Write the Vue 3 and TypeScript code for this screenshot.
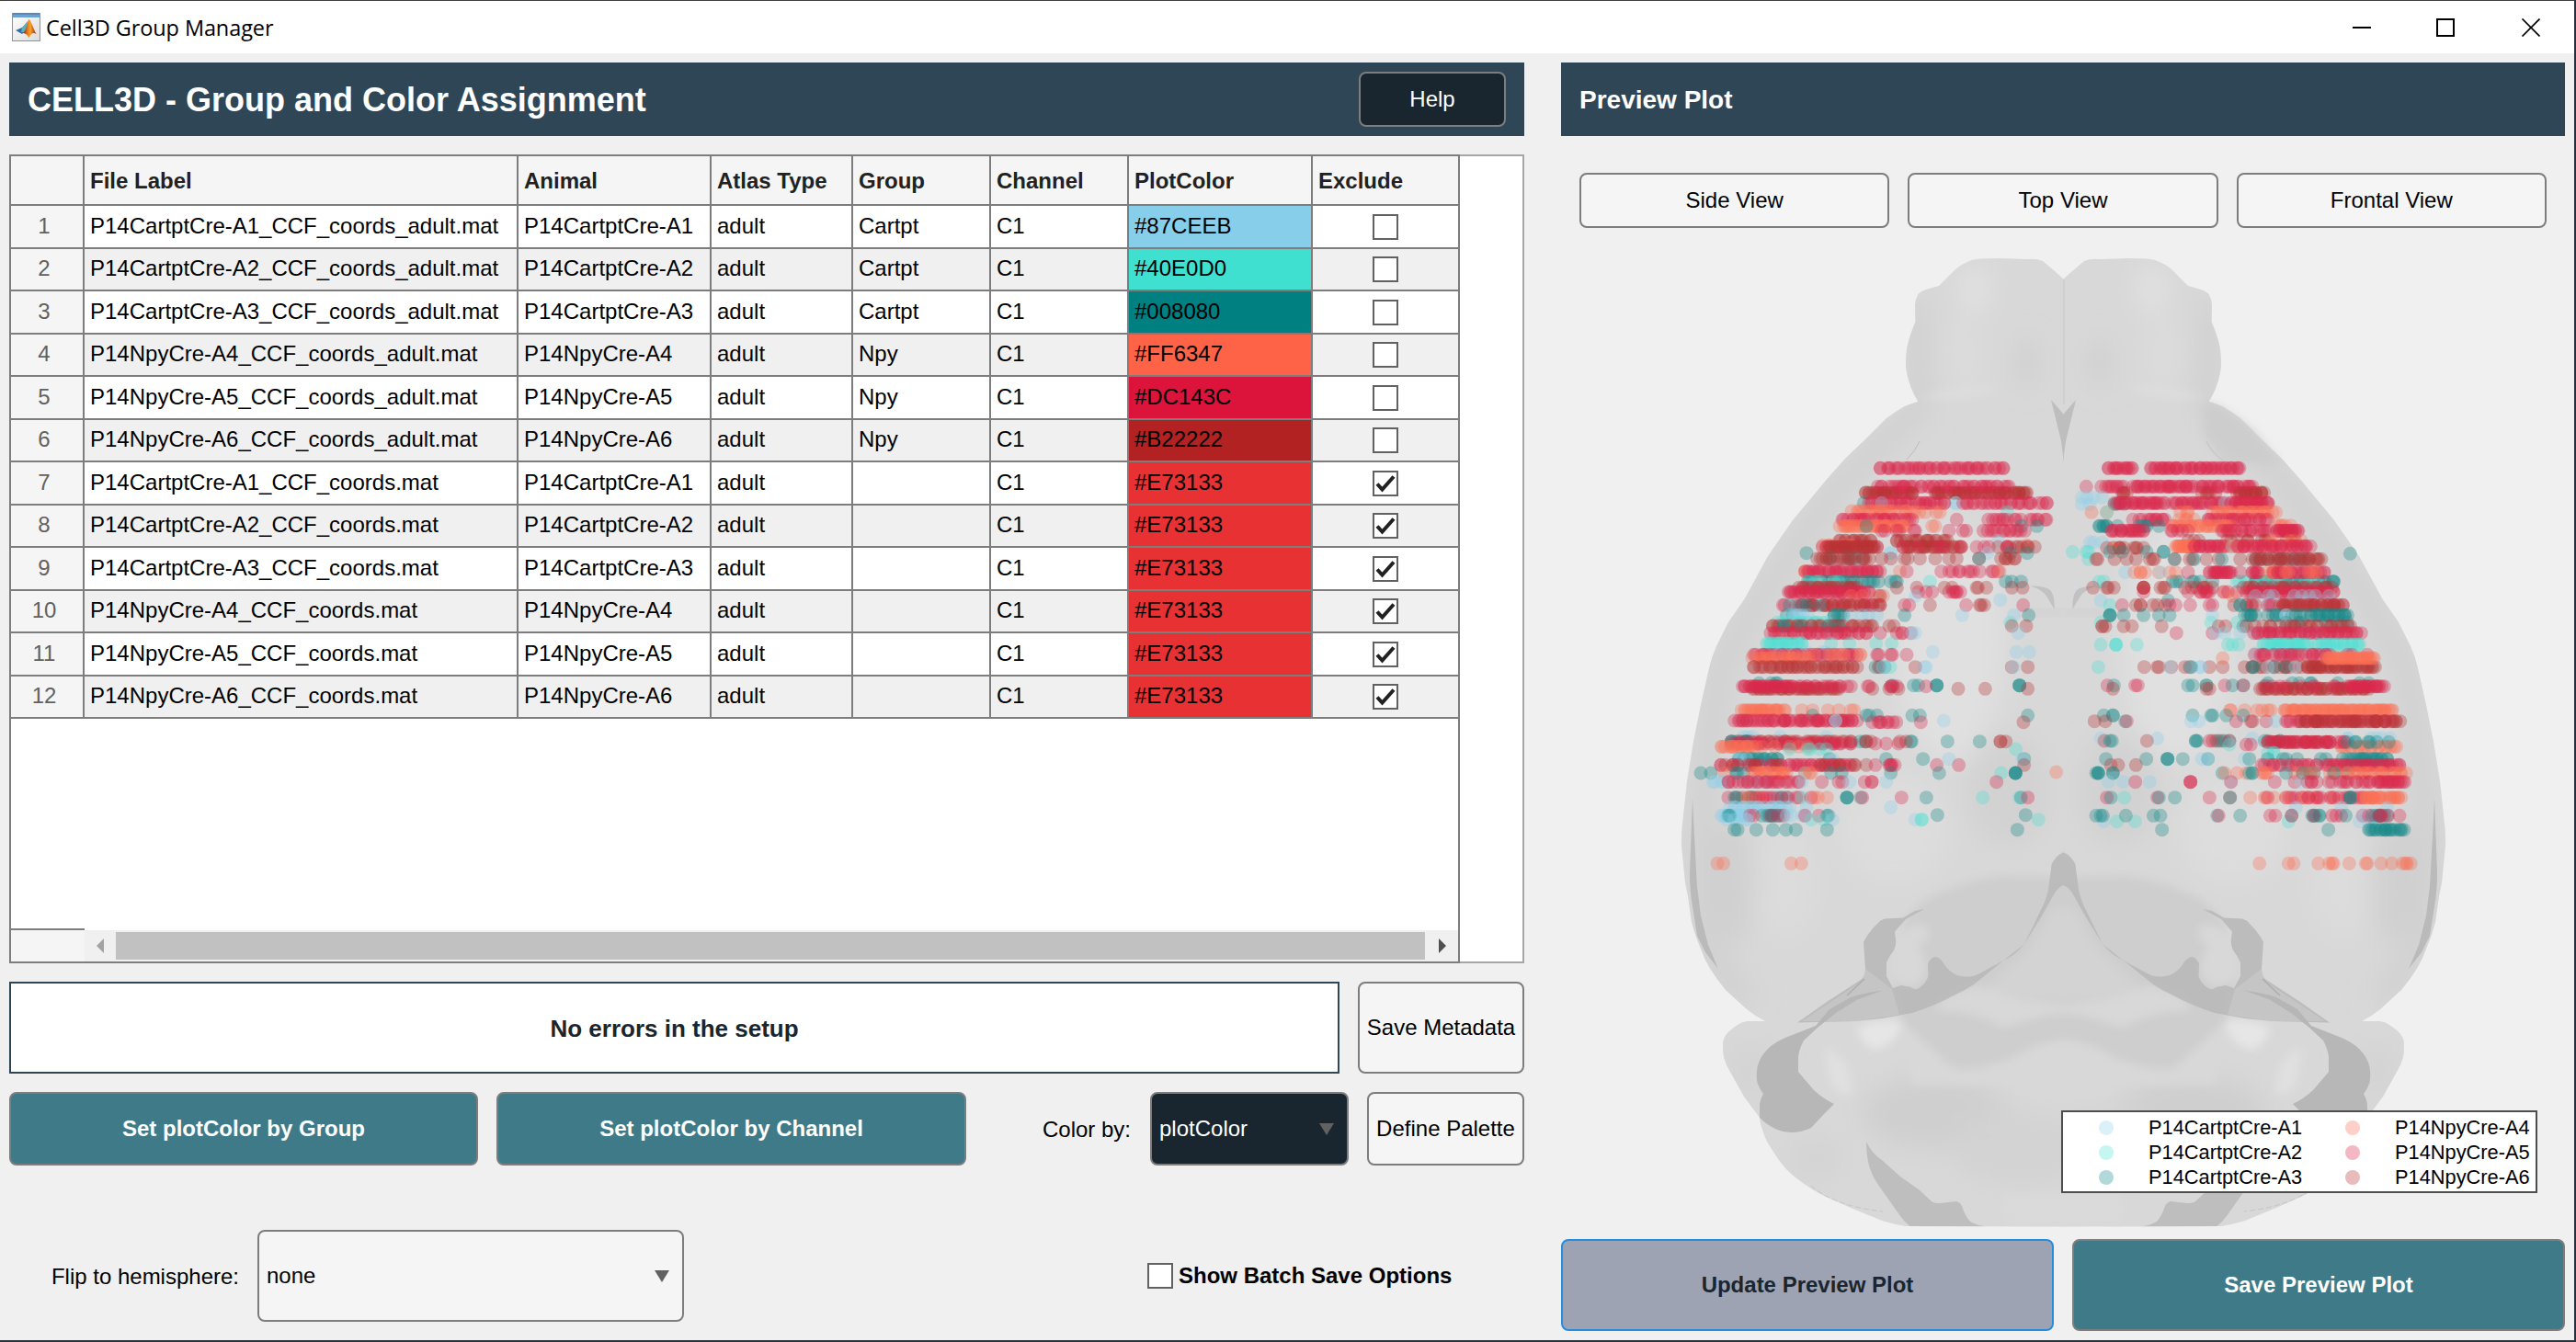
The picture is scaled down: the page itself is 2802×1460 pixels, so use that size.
<script setup lang="ts">
interface Row {
  file: string
  animal: string
  group: string
  color: string
  exclude: boolean
}

interface Dot {
  x: number
  y: number
  fill: string
}

const headers = ['', 'File Label', 'Animal', 'Atlas Type', 'Group', 'Channel', 'PlotColor', 'Exclude']

const animals = ['P14CartptCre-A1', 'P14CartptCre-A2', 'P14CartptCre-A3', 'P14NpyCre-A4', 'P14NpyCre-A5', 'P14NpyCre-A6']
const palette = ['#87CEEB', '#40E0D0', '#008080', '#FF6347', '#DC143C', '#B22222']

const rows: Row[] = [
  ...animals.map((a, i) => ({
    file: `${a}_CCF_coords_adult.mat`,
    animal: a,
    group: i < 3 ? 'Cartpt' : 'Npy',
    color: palette[i],
    exclude: false,
  })),
  ...animals.map((a) => ({
    file: `${a}_CCF_coords.mat`,
    animal: a,
    group: '',
    color: '#E73133',
    exclude: true,
  })),
]

const legend = animals.map((name, i) => ({ name, color: palette[i] }))

// Section lines: "y  series x | x*count | from-to*count". Series a-f are the six animals.
const leftCells = `
88 e736-1138*34
168 f688-840*16 f915-1214*26
148 e727-1156*34
170 f700-840*7 f920-1040*6 f1090-1210*7
202 c682 a982*2 e698-945*24 e1006-1280*20 a740
228 d642-820*14
232 d840-930*6 b1150
256 e612-840*20 e985 e1088-1278*12
277 d603-820*24 c690 d905 d915 c1196 c1247
292 e740-850*6 e960-1016*3 e1072-1208*10
325 f602-705*10 f790-955*14 a1120
340 d548-640*7 d1215
345 e547-725*12 f560-725*20 f810-1000*20 e810-1000*5 e1050-1090*3 f1120-1240*9 e1150*2
365 c495 a770*2 a1085 c1215 c1160
383 c570-680*6 f530-700*14 f740 f770 f815 f825 f865 f915 f960 f985 f1058 c1058 f1130-1175*6
425 d490*2 e492-735*26 d800 e822 e935-1060*9 e1100-1120*3 d1125
458 c500-730*14 b500-600*5 c770 c785 c790 b898 c1145 c1165 c1195
478 f470-660*18 f790 f855 f945 f970 f1050 f1055 f1082 f1165 f1200
492 e436-700*30 e860 e885 e905 e960-997*6
505 d640-745*4 f735 a850
518 a1127
535 e418-735*16 f480-735*16 c440-540*4 e815 e830 f898 e1016 f1060-1075*3 e1202
568 c430-450*2 a440-500*6 c585-615*5 a640-725*4 c815 a1003 a1172 c1220
592 b400-560*10 b1160
603 f385-710*24 c420-600*5 f765 f780 f1165 f1212
626 e378-690*24 e735 e790-835*4 a840 a850 a1186
660 b365-480*14 b575 b635 b722 b773
688 a907 a1180 a1222 a400-560*5
697 e323-660*24 d520-672*7 e725 e730 e770 e775 e822
707 d318-500*14
737 f323-660*30 c720 c735 c750 f730 b768 a745 a880 f850 a885 f1165 f1217 a1170
790 c340-400*4
797 c775 c845 c860 c920*3 c1190*3
808 f320-600*26 f710 f765 f795 f990 f1078 f1217
800 e287-450*22 e470-640*11 e695 e700 e770-790*4 e885
878 d283-425*18 d480 d515 d565 d600 d640 d650
895 c690 c700 c725 c840 c865 c515 c1217
912 a943 f300-620*6 e260-660*36 a590*2
917 e710-788*8 e868 f1203
965 a290-320*3 a410 a560
980 f250-640*26 c250-300*5 c670 c685 c835 c838 f690*2 f705 c955 c1060 f1128*2 f1145 f800 f820
987 e250-640*26 e720 e755 e795
997 d217-330*12 d350-440*3 d470-500*2
1005 b440-560*5 b1178
1037 c275-400*12 a270-300*3 c570 a580 c755 c875 a960 c1205 a1200
1057 e215-440*12 f230-400*8 e440-640*18 f540-690*8 e720 e765-783*5 e920 e992 f1205
1083 d228 c150 c183 c265-290*3 d320-430*12 b490 d490-510*3 c575 c610 c770 c928 b1130 c1177*4
1080 d1310
1112 a190-240*5 a290-370*5 e240-470*17 a480 e545 e600 e612 a635 e685 e708*2 a755 e1115
1163 e240 f265-340*5 c260-320*4 d300-350*4 c400-430*3 e330-470*9 b480 d520 e510 d532 d562 c627*3 c672 e677 e805 c886 b1070 b1190 c1195 e1217
1195 a245-440*14 a495 a770
1222 a217-300*12 c240 c245 c350-410*8 e310-420*5 a430-490*4 e490 e535 c562 c567
1235 a235-300*4 a850 b510 b550 a580 b870 b872 b1252
1220 c922 c1210
1268 c260 c270 c331 c385 c428 c460 c562 c1183
1378 d204 d224 d445 d478`

const rightCells = `
88 e220-298*10 e358-455*12 e470-648*20
168 f265 f270 f280 f525-570*4 f640-728*10
148 e148 e197-270*9 e300-500*24 e520-690*18
170 f270 f540 f650-720*5
184 a133 a150 a172 a200
205 a133 a160 c240-270*3
202 e240-405*20 e430-600*18 a600 e620-742*20
232 d165 d215 b215 d455-480*3 d560-767*18
256 d450-500*4 e300-330*3 e350-405*9 e545-740*16
275 d770-815*5
277 c190-215*6 c250 c320-345*4 c385 d430-620*18
292 e230-335*14 e425-480*5 e590-740*14 e770-840*14
325 f480-620*5 f640-830*9 d750-850*5
330 a160 a172 a200
343 d440-500*14 d560-660*6 e500-600*12 a625 d640-800*6 e640-880*24
348 f215-335*9 d240 f255
361 b103 b148 b155 c225 c265 c345 c400*2
385 b155 f180 f185 f240 f280 f310 f355 f365 f370 f437 f485 f495 f540 f580 f650 c435 c500 c590 c700-860*9 f690-915*22
367 c1009
458 b190 b205 c430-500*5 c520-560*2 b640-670*4 c700-955*14 b720-900*6 c955
428 a275 d305 d325*2 d340 d385 d420 d440 a390 e480 e550-620*12 e650 e690-710*6 d740-780*6 e760-925*16 d800-900*5
478 f170 f215 f220 f238 f335*4 f390 f400 f405 f470-560*7 f660-950*20
492 e335 e480 e520-550*6 d600 e595-640*3 e670-955*28
505 d625 a700-940*8
520 a195 c415
535 b225 e265 f310 f325*2 f365 f380 f405 e420 e440 e487 e550 e560 f630 f670-700*4 e690 c650*2 a740 e740-985*14 f780-985*18
568 c225*3 c270 c335 c385 c420 a560 c665-700*6 c740-780*5 a800*2 c820-860*4 c880-1000*14
592 b195 b555 b640 c800-1000*6
604 f200*2 f210 f270 f297 f394 f580 f602 c660 f670-780*6 f800-1010*14
626 e442 e560 a570 a600 a650 a700-900*4 e695-1045*32
664 b195 b245*3 b313 b610 b625 b645 b725-870*18 b900-1040*14
692 a700-1000*7
697 e697-930*18 e930-1065*5
737 b187 f337 f380 f385 f425 f470 f485 f550 f593 f665 a420 a490 a520*2 c490 f690-850*10 c690-800*4 a740 a830 f870-920*10 f930-1090*20
708 d593 d930-1087*24
790 c740-1070*8
797 e217 c238 c480 c495 c540*2 e600 c625 c660 e660 c735 e308 e316
808 f235 f540 f550 f715-1070*36
800 e730-780*3 e800-960*6 e1000-1120*18
878 d617 d620 d665 d705-750*4 d795-1147*44
895 c205 c235*2 c495 c555 c560 c605 c660
914 f175 f210 c275 e280 a490 a515 e637 e685 e735 f690 a765 e800-1150*28 f850-1172*24
970 a195 a380 a690 a1000-1140*6
978 f207 c225 c232 f346 c505*2 c510 f560-590*3 c580 c600 c615 e550 e615 c730-780*4
997 d980-1160*14
982 f740-940*16 e740-990*20 c1000-1135*7
990 e670 e685 b615
1017 b740-760*3
1037 c212 c344 c413*3 c463 a525 c545 a545 a665 c680 c740 c790 c800-1000*6 c1010-1130*14
1057 f228 f252 f310 e720-900*13 e930-1170*26
1083 c180 c187*3 c235*2 c592 d600 d640 d670 c680 c690*2 d720-740*4 d830-870*4 c800-1000*7 d880-1000*5 d1000-1192*14
1112 a220 a268 a355 e308 e488*3 a620 e620 e763 e828 a850 e870-900*4 e940-1100*10 e1100-1187*12
1163 e215 c228 b272 e380 c385 c437 e550 f617 c617 d683 d730-760*3 e740 e800-830*4 d800-1000*8 e850-1080*12 c1010*3 d1050-1175*16
1196 a832 a980 a1130
1241 a205 b248 b307 b808 a1040-1090*3
1222 c180 c195 c202 c277 c367 c390 c575 e580 c650 e748 e765 c818 e818 c885-910*5 e890 e950-980*3 c995 e1050 a1050-1100*3 c1080-1130*7 e1070-1170*6
1268 c395 c938 c1070-1185*14
1378 d713 d808 d825 d905 d940 d950 d955 d1006 d1060 d1065 d1110 d1145 d1180 d1190 d1195 d1207`

const DENSITY = 1.3

let seed = 7
function rand(): number {
  seed = (seed * 16807) % 2147483647
  return seed / 2147483647
}

function parseCells(source: string): Dot[] {
  const dots: Dot[] = []
  for (const line of source.trim().split('\n')) {
    const [ys, ...tokens] = line.split(' ')
    const y = Number(ys)
    for (const token of tokens) {
      const m = /^([a-f])(\d+)(?:-(\d+))?(?:\*(\d+))?$/.exec(token)
      if (!m) continue
      const fill = palette['abcdef'.indexOf(m[1])]
      const from = Number(m[2])
      const to = m[3] ? Number(m[3]) : from
      let n = m[4] ? Number(m[4]) : 1
      if (n > 9) n = Math.round(n * DENSITY)
      for (let i = 0; i < n; i++) {
        const t = n > 1 ? (i + (i > 0 && i < n - 1 ? (rand() - 0.5) * 2 : 0)) / (n - 1) : 0
        const x = from + Math.min(1, Math.max(0, t)) * (to - from)
        dots.push({ x: Math.round(x), y, fill })
      }
    }
  }
  return dots
}

const leftDots = parseCells(leftCells)
const rightDots = parseCells(rightCells)
</script>

<template>
  <div class="window">
    <div class="titlebar">
      <svg class="app-icon" viewBox="0 0 31 31">
        <defs>
          <linearGradient id="flame" x1="0" y1="0" x2="1" y2="0">
            <stop offset="0" stop-color="#7a1c12" />
            <stop offset=".35" stop-color="#e8791c" />
            <stop offset=".55" stop-color="#f4a52a" />
            <stop offset="1" stop-color="#a3200f" />
          </linearGradient>
          <linearGradient id="paper" x1="0" y1="0" x2="1" y2="1">
            <stop offset="0" stop-color="#ffffff" />
            <stop offset="1" stop-color="#dcdcdc" />
          </linearGradient>
        </defs>
        <rect x=".5" y=".5" width="30" height="30" fill="url(#paper)" stroke="#8d9299" />
        <rect x="1" y="1" width="29" height="4" fill="#6ba3d0" />
        <path d="M1 1h29" stroke="#3f77a8" />
        <path d="M4 19l7-3 3-3 3-4 -3 11 -3 3z" fill="#2f6fa8" />
        <path d="M11 16l5-5 2 2 -5 8 -3 0z" fill="#56b3c4" />
        <path d="M18.500 7c2.500 1 4.500 10 8 16-3.500-2-5-1-8 4-2-3-3-4.500-6.500-5 4-3 4.500-13 6.500-15z" fill="url(#flame)" />
      </svg>
      <span class="app-title">Cell3D Group Manager</span>
      <svg class="win-buttons" viewBox="0 0 204 20">
        <path d="M0 10h20" stroke="#000" stroke-width="2" />
        <rect x="92" y="1" width="18" height="18" fill="none" stroke="#000" stroke-width="2" />
        <path d="M184.500 .5l19 19M203.500 .5l-19 19" stroke="#000" stroke-width="1.700" />
      </svg>
    </div>

    <div class="body">
      <section class="left">
        <header class="banner">
          <h1>CELL3D - Group and Color Assignment</h1>
          <button class="btn dark help">Help</button>
        </header>

        <div class="table-frame">
          <div class="table">
            <div class="tr head">
              <div v-for="h in headers" :key="h" class="td">{{ h }}</div>
            </div>
            <div v-for="(r, i) in rows" :key="i" class="tr" :class="{ alt: i % 2 === 1 }">
              <div class="td idx">{{ i + 1 }}</div>
              <div class="td">{{ r.file }}</div>
              <div class="td">{{ r.animal }}</div>
              <div class="td">adult</div>
              <div class="td">{{ r.group }}</div>
              <div class="td">C1</div>
              <div class="td" :style="{ background: r.color }">{{ r.color }}</div>
              <div class="td check">
                <span class="box">
                  <svg v-if="r.exclude" viewBox="0 0 24 24"><path d="M3 12.500l5.500 6L21 4.500" fill="none" stroke="#212121" stroke-width="4" /></svg>
                </span>
              </div>
            </div>
            <div class="filler"></div>
            <div class="scroll">
              <div class="corner"></div>
              <svg class="arrow" viewBox="0 0 34 34"><path d="M13 17l8-8v16z" fill="#a3a3a3" /></svg>
              <div class="thumb"></div>
              <svg class="arrow right-arrow" viewBox="0 0 36 34"><path d="M23 17l-8-8v16z" fill="#505050" /></svg>
            </div>
          </div>
          <div class="table-rest"></div>
        </div>

        <div class="line status-line">
          <div class="status">No errors in the setup</div>
          <button class="btn metadata">Save Metadata</button>
        </div>

        <div class="line color-line">
          <button class="btn teal by-group">Set plotColor by Group</button>
          <button class="btn teal by-channel">Set plotColor by Channel</button>
          <span class="label color-label">Color by:</span>
          <div class="btn dark select color-select">
            plotColor
            <svg viewBox="0 0 16 13"><path d="M0 0h16l-8 13z" fill="#616161" /></svg>
          </div>
          <button class="btn define">Define Palette</button>
        </div>

        <div class="line flip-line">
          <span class="label flip-label">Flip to hemisphere:</span>
          <div class="btn select flip-select">
            none
            <svg viewBox="0 0 16 13"><path d="M0 0h16l-8 13z" fill="#616161" /></svg>
          </div>
          <span class="box batch-box"></span>
          <span class="batch">Show Batch Save Options</span>
        </div>
      </section>

      <section class="right">
        <header class="banner">
          <h2>Preview Plot</h2>
        </header>
        <div class="views">
          <button class="btn">Side View</button>
          <button class="btn">Top View</button>
          <button class="btn">Frontal View</button>
        </div>

        <div class="plot">
          <svg class="brain" viewBox="1698 248 1092 1100">
            <defs>
              <filter id="soft" x="-50%" y="-50%" width="200%" height="200%"><feGaussianBlur stdDeviation="14" /></filter>
              <filter id="soft2" x="-50%" y="-50%" width="200%" height="200%"><feGaussianBlur stdDeviation="5" /></filter>
              <path
                id="outline"
                d="M2245 304 L2235 295 2222 284Q2215 281 2206 282L2174 281Q2150 281 2145 283 2134 287 2127 293L2109 311Q2101 313 2095 315 2087 318 2086 321 2083 326 2083 332L2083.500 350Q2076 368 2074 380 2072 397 2074 405 2077 422 2086.500 437 2076 440 2070 443 2060 449 2052 455L2031 476 2006 500 1987 521.500 1950 566 1923 605 1898 651 1880 677 1867 703Q1862 714 1859 727L1850 767 1842 807 1835 850 1831 887Q1828.500 905 1829 920L1833 960 1836 975 1840 1003Q1844 1018 1850 1032 1854 1044 1860 1053.500 1867 1065 1877 1077L1900 1098Q1910 1106 1920 1111L1900 1111Q1894 1112 1890 1115 1881 1121 1878 1125 1874 1130 1874 1136 1874 1144 1875 1150 1877 1158 1882 1166L1897 1193 1914 1216Q1914 1222 1917 1229 1920 1240 1927 1250 1934 1262 1943 1272 1953 1282 1967 1291 1980 1300 1993 1305L2013 1314 2047 1328Q2060 1332 2073 1334L2245 1334.500Z"
              />
              <clipPath id="half"><use href="#outline" /></clipPath>
              <g id="hemisphere">
                <use href="#outline" fill="#d8d8d8" />
                <g clip-path="url(#half)">
                  <g filter="url(#soft)">
                    <path d="M2083 330L2090 440 2000 530 1910 660 1870 730 1850 900 1855 1030 1900 1090" fill="none" stroke="#d0d0d0" stroke-width="24" />
                    <ellipse cx="2148" cy="315" rx="16" ry="26" fill="#e2e2e2" />
                    <ellipse cx="2205" cy="395" rx="8" ry="26" fill="#cbcbcb" />
                    <ellipse cx="2135" cy="385" rx="20" ry="40" fill="#dcdcdc" />
                    <ellipse cx="2120" cy="700" rx="60" ry="130" fill="#e0e0e0" />
                    <ellipse cx="2185" cy="860" rx="45" ry="60" fill="#d2d2d2" />
                    <ellipse cx="2060" cy="900" rx="60" ry="60" fill="#dddddd" />
                    <ellipse cx="1940" cy="960" rx="36" ry="60" fill="#dcdcdc" />
                    <ellipse cx="1885" cy="960" rx="24" ry="70" fill="#d0d0d0" />
                    <ellipse cx="1905" cy="1165" rx="30" ry="30" fill="#d4d4d4" />
                    <ellipse cx="2105" cy="1210" rx="80" ry="40" fill="#cfcfcf" />
                    <ellipse cx="2200" cy="1250" rx="80" ry="40" fill="#d3d3d3" />
                    <ellipse cx="1975" cy="1260" rx="30" ry="26" fill="#d4d4d4" />
                  </g>
                  <g filter="url(#soft2)">
                    <path d="M2072 1000L2093 980Q2130 960 2173 953L2260 955V1130Q2220 1130 2190 1150 2150 1166 2125 1162L2067 1110 2052 1050z" fill="#cecece" />
                    <path d="M2115 1085L2150 1072 2200 1088 2260 1096V1102L2225 1104 2180 1118Q2140 1096 2105 1100z" fill="#d8d8d8" />
                    <path d="M2230 990Q2215 1030 2190 1048L2160 1075 2200 1086 2260 1090V985z" fill="#d3d3d3" />
                    <path d="M2062 1020Q2080 1000 2097 1008 2100 1025 2085 1030 2098 1040 2094 1062L2080 1074 2062 1070 2054 1055z" fill="#d8d8d8" />
                    <path d="M2067 1112Q2110 1160 2137 1166 2200 1160 2260 1128V1180H2080z" fill="#d8d8d8" />
                    <path d="M2020 1118Q2045 1106 2070 1112 2060 1140 2038 1142 2022 1132 2020 1118z" fill="#e6e6e6" />
                    <path d="M1985 1140Q2015 1150 2014 1190 2000 1195 1990 1175z" fill="#e0e0e0" />
                    <path d="M2180 1300H2260V1330H2180z" fill="#dadada" />
                    <path d="M2088 434Q2125 419 2175 421L2160 428 2110 434z" fill="#dedede" />
                  </g>
                  <path d="M2231 435L2245 451V503L2242 480z" fill="#bebebe" />
                  <path d="M2208 637.500Q2226 637 2231 643 2235 649 2234.700 663L2227 650Q2222 641 2208 637.500z" fill="#c2c2c2" />
                  <path d="M2198 664h47v5h-47z" fill="#cdcdcd" filter="url(#soft2)" />
                  <path d="M1841 868L1838 950Q1838 970 1841 986L1846 1018 1855 1036 1869 1054 1858 1028 1850 996 1846 964 1842.500 900z" fill="#bababa" />
                  <path
                    d="M2245 927Q2238 930 2235 935 2231 939 2231 945L2228 968Q2225 981 2220 990L2202 1027Q2193 1038 2183 1043L2157 1057Q2148 1063 2138 1062.500 2128 1062 2122 1057 2116 1052 2112 1045 2108 1041 2105 1041 2100 1042 2097 1048L2097.500 1062Q2095 1069 2090 1073 2086 1077 2082 1076 2078 1073 2073 1073L2068 1072 2059 1075 2052 1062V1047Q2055 1040 2060 1034 2063 1028 2062 1021L2061 1013.500 2073 1000 2093 989 2083 991 2070 998.500 2050 999.500Q2045 1001 2042 1005 2033 1013 2027 1025L2029 1054Q2029 1062 2024 1066L1987 1090 1955 1112.500 2017 1111 2047 1108 2080 1102Q2105 1094 2127 1082 2138 1077 2147 1071L2173 1050 2202 1027 2220 998 2233 975Q2238 965 2245 963z"
                    fill="#b9b9b9"
                    fill-opacity=".9"
                  />
                  <path d="M2058 1076L2066 1104 2017 1111 1960 1111 2026 1067 2029 1054z" fill="#cbcbcb" opacity=".6" />
                  <path d="M2028 1065L2009 1083" stroke="#adadad" stroke-width="1.500" />
                  <path
                    d="M2048 1077.500Q2028 1080 2013 1085L1990 1098 1975 1116 1943 1128.500Q1930 1134 1923 1141 1914 1150 1911.500 1161 1910 1171 1911.500 1178 1914 1185 1918 1190 1914 1197 1914 1204V1216Q1922 1224 1933 1229 1940 1232 1948 1232 1960 1232 1970 1227L1985 1211 1995 1201Q1984 1196 1973 1186L1956 1166V1150Q1957 1141 1962 1132L1977 1118 1997 1102 2020 1087.500z"
                    fill="#b4b4b4"
                    fill-opacity=".9"
                  />
                  <path
                    d="M2030 1242Q2030 1257 2033 1268 2036 1279 2043 1289L2067 1323Q2072 1330 2078 1334.500H2160Q2150 1333 2143 1329 2137 1322 2134 1312 2132 1308 2128 1307L2110 1309Q2104 1309 2101 1307L2087 1294 2067 1280 2047 1262Q2037 1256 2030 1242z"
                    fill="#bebebe"
                  />
                  <path d="M1970 1290Q1995 1312 2048 1318" fill="none" stroke="#c4c4c4" stroke-dasharray="6 3" />
                </g>
              </g>
            </defs>

            <use href="#hemisphere" />
            <use href="#hemisphere" transform="matrix(-1 0 0 1 4489 0)" />
            <path d="M2088 480Q2084 490 2074 500M2400 480Q2406 493 2418 501" fill="none" stroke="#bdbdbd" />
            <path d="M2399 437Q2394 455 2397 475L2420 505 2482 505 2450 466 2415 442z" fill="#cbcbcb" filter="url(#soft2)" opacity=".7" />
            <path d="M2245 304V440" stroke="#cfcfcf" stroke-width="2" />

            <g class="cells" transform="translate(1800 480) scale(.33333)">
              <circle v-for="(d, i) in leftDots" :key="i" :cx="d.x" :cy="d.y" r="22.5" :fill="d.fill" />
            </g>
            <g class="cells" transform="translate(2220 480) scale(.33333)">
              <circle v-for="(d, i) in rightDots" :key="i" :cx="d.x" :cy="d.y" r="22.5" :fill="d.fill" />
            </g>
          </svg>

          <div class="legend">
            <div v-for="l in legend" :key="l.name" class="legend-item">
              <i :style="{ background: l.color }"></i>
              <span>{{ l.name }}</span>
            </div>
          </div>
        </div>

        <div class="actions">
          <button class="btn update">Update Preview Plot</button>
          <button class="btn teal save">Save Preview Plot</button>
        </div>
      </section>
    </div>
  </div>
</template>

<style>
body {
  margin: 0;
}
</style>

<style scoped>
.window {
  box-sizing: border-box;
  width: 2802px;
  height: 1460px;
  display: flex;
  flex-direction: column;
  overflow: hidden;
  background: #f0f0f0;
  border-top: 1px solid #3e3e3e;
  border-right: 2px solid #29303b;
  border-bottom: 2px solid #2a3441;
  color: #000;
  font: 24px/28px 'Liberation Sans', Arial, sans-serif;
}
.window * {
  box-sizing: border-box;
}
.titlebar {
  flex: none;
  height: 57px;
  display: flex;
  align-items: center;
  padding: 0 37px 0 13px;
  background: #fff;
}
.app-icon {
  width: 31px;
  height: 31px;
}
.app-title {
  margin-left: 6px;
  padding-top: 1px;
  font-family: 'Open Sans', 'Noto Sans', sans-serif;
  font-size: 23.5px;
  letter-spacing: -0.1px;
  white-space: nowrap;
}
.win-buttons {
  width: 204px;
  height: 20px;
  margin-left: auto;
}
.body {
  flex: 1;
  display: flex;
  gap: 40px;
  padding: 10px 10px 0;
}
.left {
  width: 1648px;
  display: flex;
  flex-direction: column;
}
.right {
  width: 1092px;
  display: flex;
  flex-direction: column;
}
.banner {
  flex: none;
  height: 80px;
  display: flex;
  align-items: center;
  justify-content: space-between;
  padding: 0 20px;
  background: #2f4656;
  color: #fff;
}
h1,
h2 {
  margin: 0;
  padding-top: 2px;
  font-size: 36px;
  font-weight: bold;
  line-height: 40px;
  white-space: nowrap;
}
h2 {
  font-size: 28px;
}
.btn {
  flex: none;
  display: flex;
  align-items: center;
  justify-content: center;
  margin: 0;
  padding: 0;
  border: 2px solid #7d7d7d;
  border-radius: 8px;
  background: #f5f5f5;
  color: #000;
  font: inherit;
  white-space: nowrap;
}
.btn.dark {
  background: #19262f;
  color: #fff;
}
.btn.teal {
  background: #3f7a89;
  color: #fff;
  font-weight: bold;
}
.help {
  width: 160px;
  height: 60px;
}
.table-frame {
  flex: none;
  height: 880px;
  margin-top: 20px;
  display: flex;
}
.table {
  width: 1578px;
  display: flex;
  flex-direction: column;
  background: #fff;
  border: 2px solid #7d7d7d;
}
.table-rest {
  flex: 1;
  background: #fff;
  border: 2px solid #a6a6a6;
  border-left: 0;
}
.tr {
  display: grid;
  grid-template-columns: 80px 472px 210px 154px 150px 150px 200px 158px;
  height: 47px;
}
.tr.alt {
  height: 46px;
}
.tr.head {
  height: 54px;
}
.td {
  display: flex;
  align-items: center;
  padding: 0 0 2px 6px;
  border-right: 2px solid #7d7d7d;
  border-bottom: 2px solid #7d7d7d;
  white-space: nowrap;
}
.td:last-child {
  border-right: 0;
}
.alt .td {
  background: #f0f0f0;
}
.head .td {
  padding: 2px 0 0 6px;
  background: #f5f5f5;
  color: #212121;
  font-weight: bold;
}
.tr .idx {
  justify-content: center;
  padding: 0 6px 2px 0;
  background: #f5f5f5;
  color: #616161;
}
.tr .check {
  justify-content: center;
  padding: 0;
}
.box {
  flex: none;
  width: 28px;
  height: 28px;
  display: flex;
  background: #fff;
  border: 2px solid #616161;
}
.box svg {
  width: 24px;
  height: 24px;
}
.filler {
  flex: 1;
}
.scroll {
  flex: none;
  height: 34px;
  display: flex;
  align-items: center;
  background: #f0f0f0;
}
.corner {
  width: 80px;
  height: 36px;
  margin-top: -2px;
  background: #f5f5f5;
  border-top: 2px solid #7d7d7d;
}
.arrow {
  width: 34px;
  height: 34px;
}
.right-arrow {
  width: 36px;
}
.thumb {
  flex: 1;
  height: 30px;
  background: #c1c1c1;
}
.line {
  flex: none;
  display: flex;
  align-items: center;
}
.status-line {
  height: 100px;
  margin-top: 20px;
  justify-content: space-between;
}
.status {
  width: 1447px;
  height: 100px;
  display: flex;
  align-items: center;
  justify-content: center;
  padding-top: 2px;
  border: 2px solid #2f4656;
  background: #fff;
  color: #19262f;
  font-size: 26px;
  font-weight: bold;
}
.metadata {
  width: 181px;
  height: 100px;
}
.color-line {
  height: 80px;
  margin-top: 20px;
}
.color-line .btn {
  height: 80px;
}
.by-group {
  width: 510px;
  margin-right: 20px;
}
.by-channel {
  width: 511px;
}
.label {
  padding-top: 1px;
  white-space: nowrap;
  text-align: right;
}
.color-label {
  width: 179px;
  margin-right: 21px;
}
.color-line .color-select {
  width: 216px;
  margin-right: 20px;
}
.select {
  justify-content: space-between;
  padding-left: 8px;
  padding-right: 14px;
}
.select svg {
  width: 16px;
  height: 13px;
}
.define {
  flex: 1;
}
.flip-line {
  height: 100px;
  margin-top: 70px;
}
.flip-label {
  width: 250px;
  margin-right: 20px;
}
.flip-select {
  width: 464px;
  height: 100px;
  padding-left: 8px;
}
.batch-box {
  margin-left: 504px;
}
.batch {
  margin-left: 6px;
  font-weight: bold;
  white-space: nowrap;
}
.views {
  flex: none;
  display: flex;
  gap: 20px;
  margin: 40px 20px 0;
}
.views .btn {
  flex: 1;
  height: 60px;
}
.plot {
  flex: none;
  position: relative;
  height: 1100px;
}
.brain {
  display: block;
  width: 1092px;
  height: 1100px;
}
.cells {
  opacity: 0.9;
  fill-opacity: 0.33;
}
.legend {
  position: absolute;
  left: 544px;
  top: 960px;
  width: 518px;
  height: 90px;
  display: grid;
  grid-template-rows: repeat(3, 27px);
  grid-auto-flow: column;
  grid-template-columns: 268px 1fr;
  align-content: center;
  padding-top: 1px;
  border: 2px solid #4d4d4d;
  background: #fff;
  font-size: 21.8px;
}
.legend-item {
  display: flex;
  align-items: center;
  white-space: nowrap;
}
.legend-item i {
  flex: none;
  width: 16px;
  height: 16px;
  margin: 0 38px 0 39px;
  border-radius: 50%;
  opacity: 0.3;
}
.actions {
  display: flex;
  gap: 20px;
}
.actions .btn {
  width: 536px;
  height: 100px;
  font-weight: bold;
}
.actions .update {
  background: #9ea3b3;
  border-color: #268cdd;
  color: #19262f;
}
</style>
